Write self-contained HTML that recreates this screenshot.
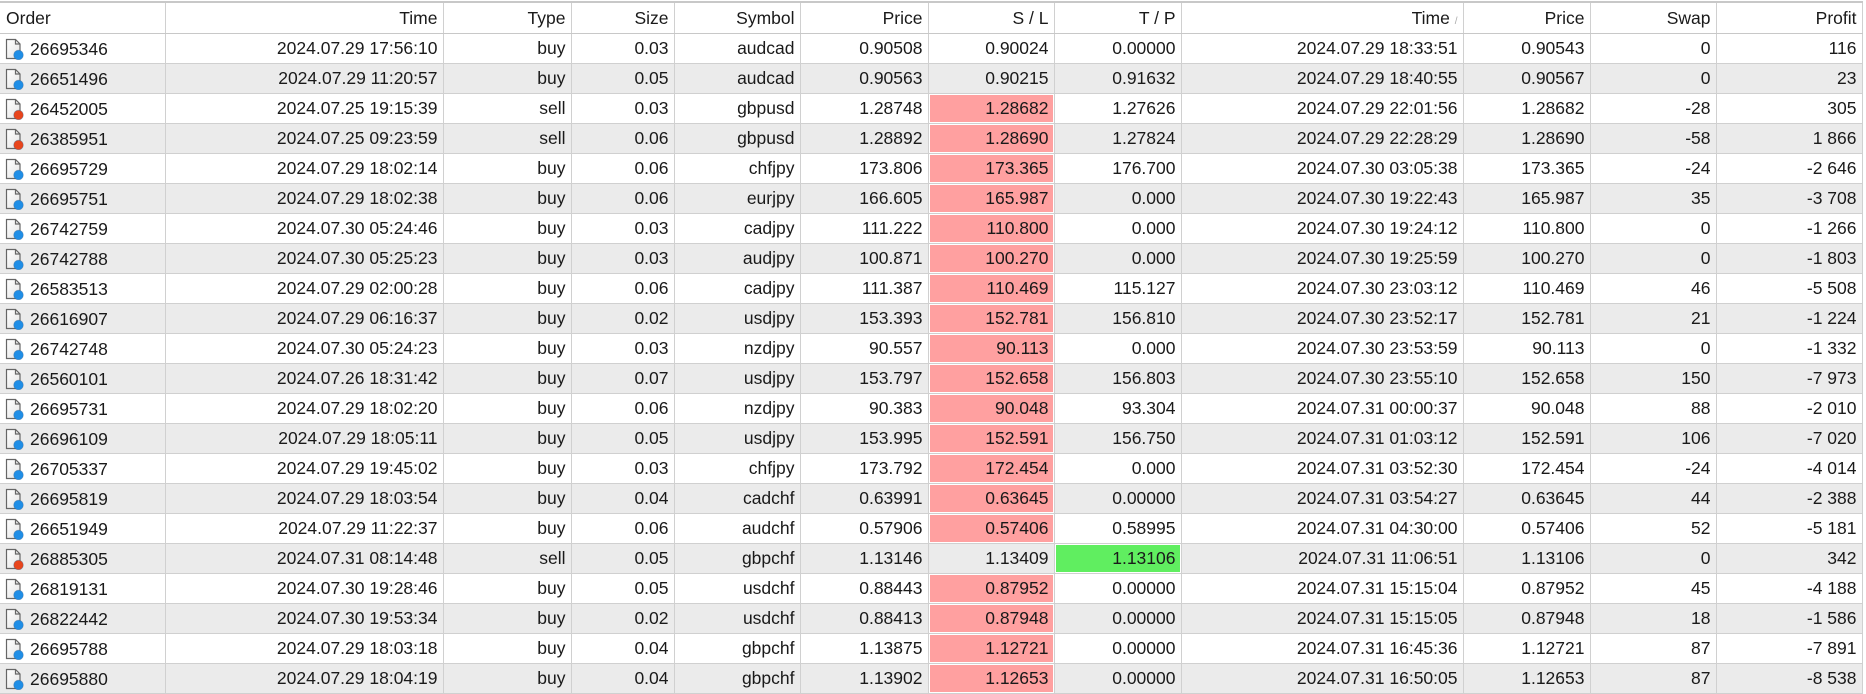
<!DOCTYPE html>
<html><head><meta charset="utf-8"><style>
html,body{margin:0;padding:0;background:#fff;width:1866px;height:694px;overflow:hidden}
body{font-family:"Liberation Sans",sans-serif;font-size:17.5px;color:#1a1a1a}
table{border-collapse:collapse;table-layout:fixed;width:1862px;position:absolute;top:1px;left:0}
td,th{height:29px;padding:0 5px 0 0;text-align:right;border-right:1px solid #d0d0d0;border-bottom:1px solid #d0d0d0;white-space:nowrap;overflow:hidden;font-weight:normal}
th{height:30px;border-top:2px solid #c8c8c8;border-bottom:1px solid #c8c8c8}
th:first-child,td:first-child{text-align:left;padding-left:6px}
tr:nth-child(even) td{background:#ebebeb}
tr td.r{background:#ffa0a0!important;box-shadow:inset 0 0 0 1px #fff}
tr td.g{background:#60ee60!important;box-shadow:inset 0 0 0 1px #fff}
.ic{display:inline-block;position:relative;width:22px;height:22px;vertical-align:-5px;margin-right:5px;margin-left:-3px}
.ic svg{position:absolute;left:0;top:0}
</style></head><body>
<svg width="0" height="0" style="position:absolute"><defs>
<linearGradient id="pg" x1="0" y1="0" x2="1" y2="1"><stop offset="0" stop-color="#fff"/><stop offset="1" stop-color="#e4e4e4"/></linearGradient>
<g id="doc"><path d="M3.5 1.5h9l4.5 4.5v14.5h-13.5z" fill="url(#pg)" stroke="#666" stroke-width="1.2"/><path d="M12.5 1.5v4.5h4.5" fill="none" stroke="#666" stroke-width="1.2"/></g>
</defs></svg>
<table>
<colgroup><col style="width:165px"><col style="width:278px"><col style="width:128px"><col style="width:103px"><col style="width:126px"><col style="width:128px"><col style="width:126px"><col style="width:127px"><col style="width:282px"><col style="width:127px"><col style="width:126px"><col style="width:146px"></colgroup>
<tr><th>Order</th><th>Time</th><th>Type</th><th>Size</th><th>Symbol</th><th>Price</th><th>S / L</th><th>T / P</th><th>Time <span style="color:#aaa;font-size:10px">/</span></th><th>Price</th><th>Swap</th><th>Profit</th></tr>
<script>
var rows=[
["26695346","2024.07.29 17:56:10","buy","0.03","audcad","0.90508","0.90024","0.00000","2024.07.29 18:33:51","0.90543","0","116",0],
["26651496","2024.07.29 11:20:57","buy","0.05","audcad","0.90563","0.90215","0.91632","2024.07.29 18:40:55","0.90567","0","23",0],
["26452005","2024.07.25 19:15:39","sell","0.03","gbpusd","1.28748","1.28682","1.27626","2024.07.29 22:01:56","1.28682","-28","305",1],
["26385951","2024.07.25 09:23:59","sell","0.06","gbpusd","1.28892","1.28690","1.27824","2024.07.29 22:28:29","1.28690","-58","1 866",1],
["26695729","2024.07.29 18:02:14","buy","0.06","chfjpy","173.806","173.365","176.700","2024.07.30 03:05:38","173.365","-24","-2 646",1],
["26695751","2024.07.29 18:02:38","buy","0.06","eurjpy","166.605","165.987","0.000","2024.07.30 19:22:43","165.987","35","-3 708",1],
["26742759","2024.07.30 05:24:46","buy","0.03","cadjpy","111.222","110.800","0.000","2024.07.30 19:24:12","110.800","0","-1 266",1],
["26742788","2024.07.30 05:25:23","buy","0.03","audjpy","100.871","100.270","0.000","2024.07.30 19:25:59","100.270","0","-1 803",1],
["26583513","2024.07.29 02:00:28","buy","0.06","cadjpy","111.387","110.469","115.127","2024.07.30 23:03:12","110.469","46","-5 508",1],
["26616907","2024.07.29 06:16:37","buy","0.02","usdjpy","153.393","152.781","156.810","2024.07.30 23:52:17","152.781","21","-1 224",1],
["26742748","2024.07.30 05:24:23","buy","0.03","nzdjpy","90.557","90.113","0.000","2024.07.30 23:53:59","90.113","0","-1 332",1],
["26560101","2024.07.26 18:31:42","buy","0.07","usdjpy","153.797","152.658","156.803","2024.07.30 23:55:10","152.658","150","-7 973",1],
["26695731","2024.07.29 18:02:20","buy","0.06","nzdjpy","90.383","90.048","93.304","2024.07.31 00:00:37","90.048","88","-2 010",1],
["26696109","2024.07.29 18:05:11","buy","0.05","usdjpy","153.995","152.591","156.750","2024.07.31 01:03:12","152.591","106","-7 020",1],
["26705337","2024.07.29 19:45:02","buy","0.03","chfjpy","173.792","172.454","0.000","2024.07.31 03:52:30","172.454","-24","-4 014",1],
["26695819","2024.07.29 18:03:54","buy","0.04","cadchf","0.63991","0.63645","0.00000","2024.07.31 03:54:27","0.63645","44","-2 388",1],
["26651949","2024.07.29 11:22:37","buy","0.06","audchf","0.57906","0.57406","0.58995","2024.07.31 04:30:00","0.57406","52","-5 181",1],
["26885305","2024.07.31 08:14:48","sell","0.05","gbpchf","1.13146","1.13409","1.13106","2024.07.31 11:06:51","1.13106","0","342",2],
["26819131","2024.07.30 19:28:46","buy","0.05","usdchf","0.88443","0.87952","0.00000","2024.07.31 15:15:04","0.87952","45","-4 188",1],
["26822442","2024.07.30 19:53:34","buy","0.02","usdchf","0.88413","0.87948","0.00000","2024.07.31 15:15:05","0.87948","18","-1 586",1],
["26695788","2024.07.29 18:03:18","buy","0.04","gbpchf","1.13875","1.12721","0.00000","2024.07.31 16:45:36","1.12721","87","-7 891",1],
["26695880","2024.07.29 18:04:19","buy","0.04","gbpchf","1.13902","1.12653","0.00000","2024.07.31 16:50:05","1.12653","87","-8 538",1]];
rows.forEach(function(r){
var col=r[2]=="sell"?"#e8451c":"#1f8ee6";
var h='<tr><td><span class="ic"><svg width="22" height="22" viewBox="0 0 22 22"><use href="#doc"/><circle cx="15.5" cy="17" r="4.8" fill="'+col+'" stroke="#2a5a8a" stroke-opacity=".4" stroke-width=".8"/></svg></span>'+r[0]+'</td>';
for(var i=1;i<12;i++){var c='';if(i==6&&r[12]==1)c=' class="r"';if(i==7&&r[12]==2)c=' class="g"';h+='<td'+c+'>'+r[i]+'</td>';}
document.write(h+'</tr>');});
</script>
</table>
</body></html>
